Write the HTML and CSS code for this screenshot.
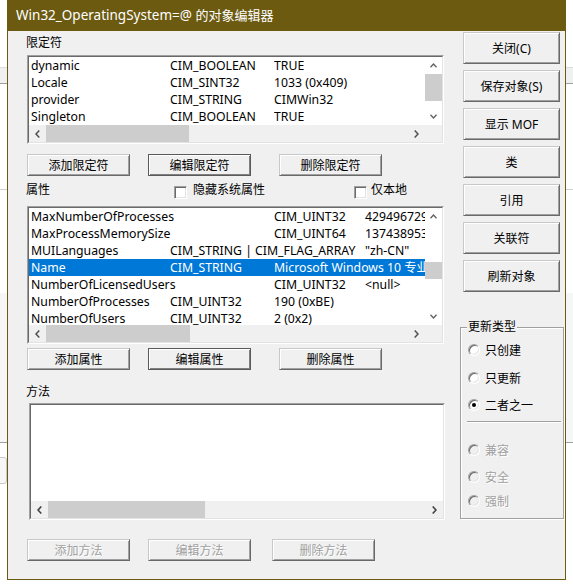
FILE: index.html
```html
<!DOCTYPE html>
<html lang="zh-CN">
<head>
<meta charset="utf-8">
<title>Win32_OperatingSystem=@ 的对象编辑器</title>
<link rel="stylesheet" href="styles.css">
</head>
<body>
<div class="desk">
  <div class="desk-band"></div>
  <div class="desk-line"></div>
  <div class="desk-panel"></div>
  <div class="desk-btn"></div>
</div>
<div class="dlg">
  <div class="title">Win32_OperatingSystem=@ <span class="title-cjk">的对象编辑器</span></div>
  <div class="client">
    <div class="left">
      <div class="lbl lbl-q">限定符</div>
      <div class="sunken qlist">
        <div class="lv">
          <div class="rows">
            <div class="row"><span>dynamic</span><span>CIM_BOOLEAN</span><span>TRUE</span></div>
            <div class="row"><span>Locale</span><span>CIM_SINT32</span><span class="s2">1033 (0x409)</span></div>
            <div class="row"><span>provider</span><span>CIM_STRING</span><span>CIMWin32</span></div>
            <div class="row"><span>Singleton</span><span>CIM_BOOLEAN</span><span>TRUE</span></div>
          </div>
          <div class="vs">
            <div class="arr"><svg width="7" height="5" viewBox="0 0 7 5"><polyline points="0.5,4.3 3.5,1 6.5,4.3" fill="none" stroke="#606060" stroke-width="1.3"/></svg></div>
            <div class="vtrack"><div class="vthumb vthumb-q"></div></div>
            <div class="arr"><svg width="7" height="5" viewBox="0 0 7 5"><polyline points="0.5,0.7 3.5,4 6.5,0.7" fill="none" stroke="#606060" stroke-width="1.3"/></svg></div>
          </div>
          <div class="hs">
            <div class="arr"><svg width="5" height="8" viewBox="0 0 5 8"><polyline points="4.3,0.5 1,4 4.3,7.5" fill="none" stroke="#505050" stroke-width="1.5"/></svg></div>
            <div class="hthumb hthumb-q"></div>
            <div class="hspace"></div>
            <div class="arr"><svg width="5" height="8" viewBox="0 0 5 8"><polyline points="0.7,0.5 4,4 0.7,7.5" fill="none" stroke="#505050" stroke-width="1.5"/></svg></div>
          </div>
          <div class="corner"></div>
        </div>
      </div>
      <div class="btnrow btnrow-q">
        <div class="btn">添加限定符</div>
        <div class="btn def b2">编辑限定符</div>
        <div class="btn b3">删除限定符</div>
      </div>
      <div class="lblrow">
        <span class="lbl lbl-p">属性</span>
        <span class="chk chk-1"><span class="cb"></span><span class="cb-text">隐藏系统属性</span></span>
        <span class="chk chk-2"><span class="cb"></span><span class="cb-text2">仅本地</span></span>
      </div>
      <div class="sunken plist">
        <div class="lv">
          <div class="rows">
            <div class="row"><span class="s2">MaxNumberOfProcesses</span><span>CIM_UINT32</span><span>4294967295</span></div>
            <div class="row"><span class="s2">MaxProcessMemorySize</span><span>CIM_UINT64</span><span>137438953344</span></div>
            <div class="row"><span>MUILanguages</span><span class="s2">CIM_STRING | CIM_FLAG_ARRAY</span><span>"zh-CN"</span></div>
            <div class="row sel"><span>Name</span><span>CIM_STRING</span><span class="s2">Microsoft Windows 10 专业版</span></div>
            <div class="row"><span class="s2">NumberOfLicensedUsers</span><span>CIM_UINT32</span><span>&lt;null&gt;</span></div>
            <div class="row"><span>NumberOfProcesses</span><span>CIM_UINT32</span><span class="s2">190 (0xBE)</span></div>
            <div class="row"><span>NumberOfUsers</span><span>CIM_UINT32</span><span class="s2">2 (0x2)</span></div>
          </div>
          <div class="vs">
            <div class="arr"><svg width="7" height="5" viewBox="0 0 7 5"><polyline points="0.5,4.3 3.5,1 6.5,4.3" fill="none" stroke="#606060" stroke-width="1.3"/></svg></div>
            <div class="vtrack"><div class="vthumb vthumb-p"></div></div>
            <div class="arr"><svg width="7" height="5" viewBox="0 0 7 5"><polyline points="0.5,0.7 3.5,4 6.5,0.7" fill="none" stroke="#606060" stroke-width="1.3"/></svg></div>
          </div>
          <div class="hs">
            <div class="arr"><svg width="5" height="8" viewBox="0 0 5 8"><polyline points="4.3,0.5 1,4 4.3,7.5" fill="none" stroke="#505050" stroke-width="1.5"/></svg></div>
            <div class="hthumb hthumb-p"></div>
            <div class="hspace"></div>
            <div class="arr"><svg width="5" height="8" viewBox="0 0 5 8"><polyline points="0.7,0.5 4,4 0.7,7.5" fill="none" stroke="#505050" stroke-width="1.5"/></svg></div>
          </div>
          <div class="corner"></div>
        </div>
      </div>
      <div class="btnrow btnrow-p">
        <div class="btn">添加属性</div>
        <div class="btn def b2">编辑属性</div>
        <div class="btn b3">删除属性</div>
      </div>
      <div class="lbl lbl-m">方法</div>
      <div class="sunken mlist">
        <div class="lv lv-m">
          <div class="rows"></div>
          <div class="hs">
            <div class="arr"><svg width="5" height="8" viewBox="0 0 5 8"><polyline points="4.3,0.5 1,4 4.3,7.5" fill="none" stroke="#404040" stroke-width="1.6"/></svg></div>
            <div class="hthumb hthumb-m"></div>
            <div class="hspace"></div>
            <div class="arr"><svg width="5" height="8" viewBox="0 0 5 8"><polyline points="0.7,0.5 4,4 0.7,7.5" fill="none" stroke="#404040" stroke-width="1.6"/></svg></div>
          </div>
        </div>
      </div>
      <div class="btnrow btnrow-m">
        <div class="btn dis">添加方法</div>
        <div class="btn dis b2">编辑方法</div>
        <div class="btn dis b3m">删除方法</div>
      </div>
    </div>
    <div class="right">
      <div class="btn rbtn">关闭(C)</div>
      <div class="btn rbtn">保存对象(S)</div>
      <div class="btn rbtn">显示 MOF</div>
      <div class="btn rbtn">类</div>
      <div class="btn rbtn">引用</div>
      <div class="btn rbtn">关联符</div>
      <div class="btn rbtn">刷新对象</div>
      <fieldset class="group">
        <legend>更新类型</legend>
        <div class="radio r1"><span class="rb"></span><span>只创建</span></div>
        <div class="radio r2"><span class="rb"></span><span>只更新</span></div>
        <div class="radio r3"><span class="rb on"></span><span>二者之一</span></div>
        <div class="sep"></div>
        <div class="radio r4 dis"><span class="rb"></span><span>兼容</span></div>
        <div class="radio r5 dis"><span class="rb"></span><span>安全</span></div>
        <div class="radio r6 dis"><span class="rb"></span><span>强制</span></div>
      </fieldset>
    </div>
  </div>
</div>
</body>
</html>
```

FILE: styles.css
```css
* { box-sizing: border-box; }
html, body { margin: 0; padding: 0; }
body {
  width: 573px;
  height: 587px;
  overflow: hidden;
  background: #fff;
  position: relative;
  font-family: "Noto Sans", "Noto Sans CJK SC", sans-serif;
  font-size: 12px;
  color: #000;
}

/* background window behind the dialog */
.desk { display: flex; flex-direction: column; }
.desk-band { height: 17px; margin-top: 67px; background: #f0f0f0; border-top: 1px solid #dcdcdc; border-bottom: 1px solid #a0a0a0; }
.desk-line { height: 1px; margin-top: 105px; background: #d0d0d0; }
.desk-panel { height: 150px; margin-top: 103px; background: #f6f6f6; border-bottom: 1px solid #a0a0a0; }
.desk-btn { width: 20px; height: 27px; margin: 14px 0 0 -13px; border: 1px solid #c8c8c8; border-radius: 3px; background: #f6f6f6; }

/* dialog window */
.dlg {
  position: absolute;
  left: 7px;
  top: 0;
  width: 559px;
  height: 580px;
  background: #f0f0f0;
  border: 1px solid #6b5a10;
  border-top: 0;
  display: flex;
  flex-direction: column;
}
.title {
  height: 31px;
  flex: none;
  background: #6b5a10;
  color: #fff;
  font-size: 13.5px;
  line-height: 31px;
  padding-left: 8px;
  white-space: nowrap;
}
.title-cjk { font-size: 13px; }

.client { display: flex; flex: 1; }
.left { width: 417px; margin-left: 19px; display: flex; flex-direction: column; }
.right { width: 104px; margin-left: 16px; display: flex; flex-direction: column; }

.lbl { height: 16px; line-height: 16px; margin-left: -1px; }
.lbl-q { margin-top: 4px; }
.lbl-m { margin-top: 14px; }

/* sunken list views */
.sunken {
  border: 1px solid;
  border-color: #a0a0a0 #fff #fff #a0a0a0;
}
.lv {
  height: 100%;
  border: 1px solid;
  border-color: #696969 #e3e3e3 #e3e3e3 #696969;
  background: #fff;
  display: grid;
  grid-template-columns: minmax(0, 1fr) 17px;
  grid-template-rows: minmax(0, 1fr) 17px;
}
.lv-m { grid-template-columns: minmax(0, 1fr); }
.qlist { margin-top: 4px; height: 89px; }
.plist { margin-top: 8px; height: 138px; }
.mlist { margin-top: 3px; height: 117px; margin-left: 2px; width: 416px; }

.rows { overflow: hidden; background: #fff; }
.row {
  display: grid;
  grid-template-columns: 139px 104px 91px minmax(0, 1fr);
  height: 17px;
  line-height: 17px;
  padding-left: 2px;
  white-space: nowrap;
  font-size: 12.25px;
}
.row > span { overflow: hidden; text-overflow: clip; min-width: 0; }
.row .s2 { grid-column: span 2; }
.row.sel { background: #0078d7; color: #fff; }

.vs { display: flex; flex-direction: column; background: #fff; }
.arr { width: 17px; height: 17px; flex: none; display: flex; align-items: center; justify-content: center; }
.vtrack { flex: 1; }
.vthumb { background: #cdcdcd; width: 100%; }
.vthumb-q { margin-top: 0; height: 27px; }
.vthumb-p { margin-top: 37px; height: 17px; }

.hs { display: flex; background: #f0f0f0; }
.hthumb { background: #cdcdcd; height: 100%; flex: none; }
.hthumb-q { width: 143px; }
.hthumb-p { width: 144px; }
.hthumb-m { width: 157px; }
.hspace { flex: 1; }
.corner { background: #f0f0f0; }

/* buttons */
.btn {
  display: flex;
  align-items: center;
  justify-content: center;
  width: 103px;
  height: 22px;
  background: #f0f0f0;
  border: 1px solid;
  border-color: #c8c8c8 #696969 #696969 #c8c8c8;
  box-shadow: inset 1px 1px #fff, inset -1px -1px #a0a0a0;
  white-space: nowrap;
  flex: none;
}
.btn.def {
  border-color: #5a5a5a;
  box-shadow: inset 1px 1px #fff, inset -1px -1px #808080;
}
.btn.dis { color: #a0a0a0; text-shadow: 1px 1px #fff; }

.btnrow { display: flex; }
.btnrow-q { margin-top: 10px; }
.btnrow-p { margin-top: 4px; }
.btnrow-m { margin-top: 19px; }
.b2 { margin-left: 18px; }
.b3 { margin-left: 28px; }
.b3m { margin-left: 21px; }

.rbtn { width: 97px; height: 32px; margin-left: 3px; margin-top: 6px; }
.rbtn:first-child { margin-top: 1px; }

/* label row with checkboxes */
.lblrow { display: flex; height: 16px; line-height: 16px; margin-top: 6px; }
.lbl-p { width: 148px; flex: none; }
.chk { display: flex; flex: none; }
.chk-1 { width: 180px; }
.cb {
  width: 13px;
  height: 13px;
  margin-top: 4px;
  flex: none;
  background: #fff;
  border: 1px solid;
  border-color: #a0a0a0 #fff #fff #a0a0a0;
  box-shadow: inset 1px 1px #696969, inset -1px -1px #e3e3e3;
}
.cb-text { margin-left: 6px; }
.cb-text2 { margin-left: 4px; }

/* group box */
.group {
  margin: 27px 0 0 0;
  width: 104px;
  height: 200px;
  padding: 0 0 0 7px;
  border: 1px solid #a0a0a0;
  box-shadow: inset 1px 1px #fff, 1px 1px #fff;
  min-width: 0;
}
.group legend {
  padding: 0 1px;
  margin-left: -1px;
  height: 16px;
  line-height: 16px;
  background: #f0f0f0;
}
.radio { display: flex; align-items: center; height: 16px; }
.radio.dis { color: #a0a0a0; text-shadow: 1px 1px #fff; }
.rb {
  width: 12px;
  height: 12px;
  flex: none;
  border-radius: 50%;
  background: #fff;
  border: 1px solid;
  border-color: #a0a0a0 #fff #fff #a0a0a0;
  box-shadow: inset 1px 1px #696969, inset -1px -1px #e3e3e3;
  margin-right: 5px;
  display: flex;
  align-items: center;
  justify-content: center;
}
.radio.dis .rb { background: #f0f0f0; }
.rb.on::after { content: ""; width: 4px; height: 4px; border-radius: 50%; background: #000; }
.r1 { margin-top: 7px; }
.r2 { margin-top: 12px; }
.r3 { margin-top: 11px; }
.sep { height: 2px; margin: 8px 0 0 -1px; width: 94px; border-top: 1px solid #a0a0a0; border-bottom: 1px solid #fff; }
.r4 { margin-top: 19px; }
.r5 { margin-top: 11px; }
.r6 { margin-top: 8px; }
```
